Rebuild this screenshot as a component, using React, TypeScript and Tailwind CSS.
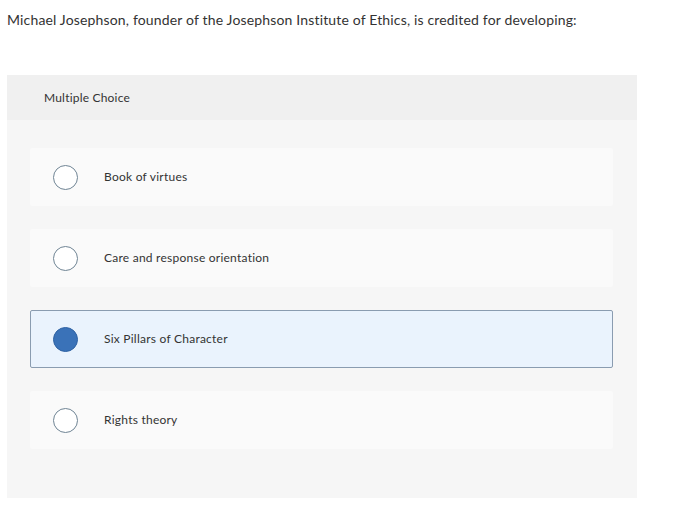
const options = [
  { label: "Book of virtues", selected: false },
  { label: "Care and response orientation", selected: false },
  { label: "Six Pillars of Character", selected: true },
  { label: "Rights theory", selected: false },
];

export default function App() {
  return (
    <div
      className="w-[700px] h-[529px] bg-white text-[#333]"
      style={{ fontFamily: "Lato, 'Open Sans', sans-serif" }}
    >
      <p className="pl-[7px] pt-[11px] text-[14px] leading-[18px] tracking-[0.16px]">
        Michael Josephson, founder of the Josephson Institute of Ethics, is credited for developing:
      </p>

      <div className="ml-[7px] mt-[46px] w-[630px] bg-[#f6f6f6]">
        <div className="h-[45px] bg-[#f0f0f0] pl-[37px] flex items-center text-[12px] tracking-[0.2px]">
          Multiple Choice
        </div>
        <div className="pt-[28px] pb-[49px] pl-[23px] pr-[24px] flex flex-col gap-[23px]">
          {options.map((o) => (
            <div
              key={o.label}
              className={
                o.selected
                  ? "h-[58px] flex items-center rounded-[2px] border border-[#8a9cb0] bg-[#eaf3fd]"
                  : "h-[58px] flex items-center rounded-[2px] border border-transparent bg-[#fafafa]"
              }
            >
              <span
                className={
                  o.selected
                    ? "ml-[22px] w-[25px] h-[25px] rounded-full bg-[#3a72b8] border border-[#2f62a3]"
                    : "ml-[22px] w-[25px] h-[25px] rounded-full border-[1.5px] border-[#6f8494] bg-white"
                }
              />
              <span className="ml-[26px] text-[12px] tracking-[0.24px]">{o.label}</span>
            </div>
          ))}
        </div>
      </div>
    </div>
  );
}
